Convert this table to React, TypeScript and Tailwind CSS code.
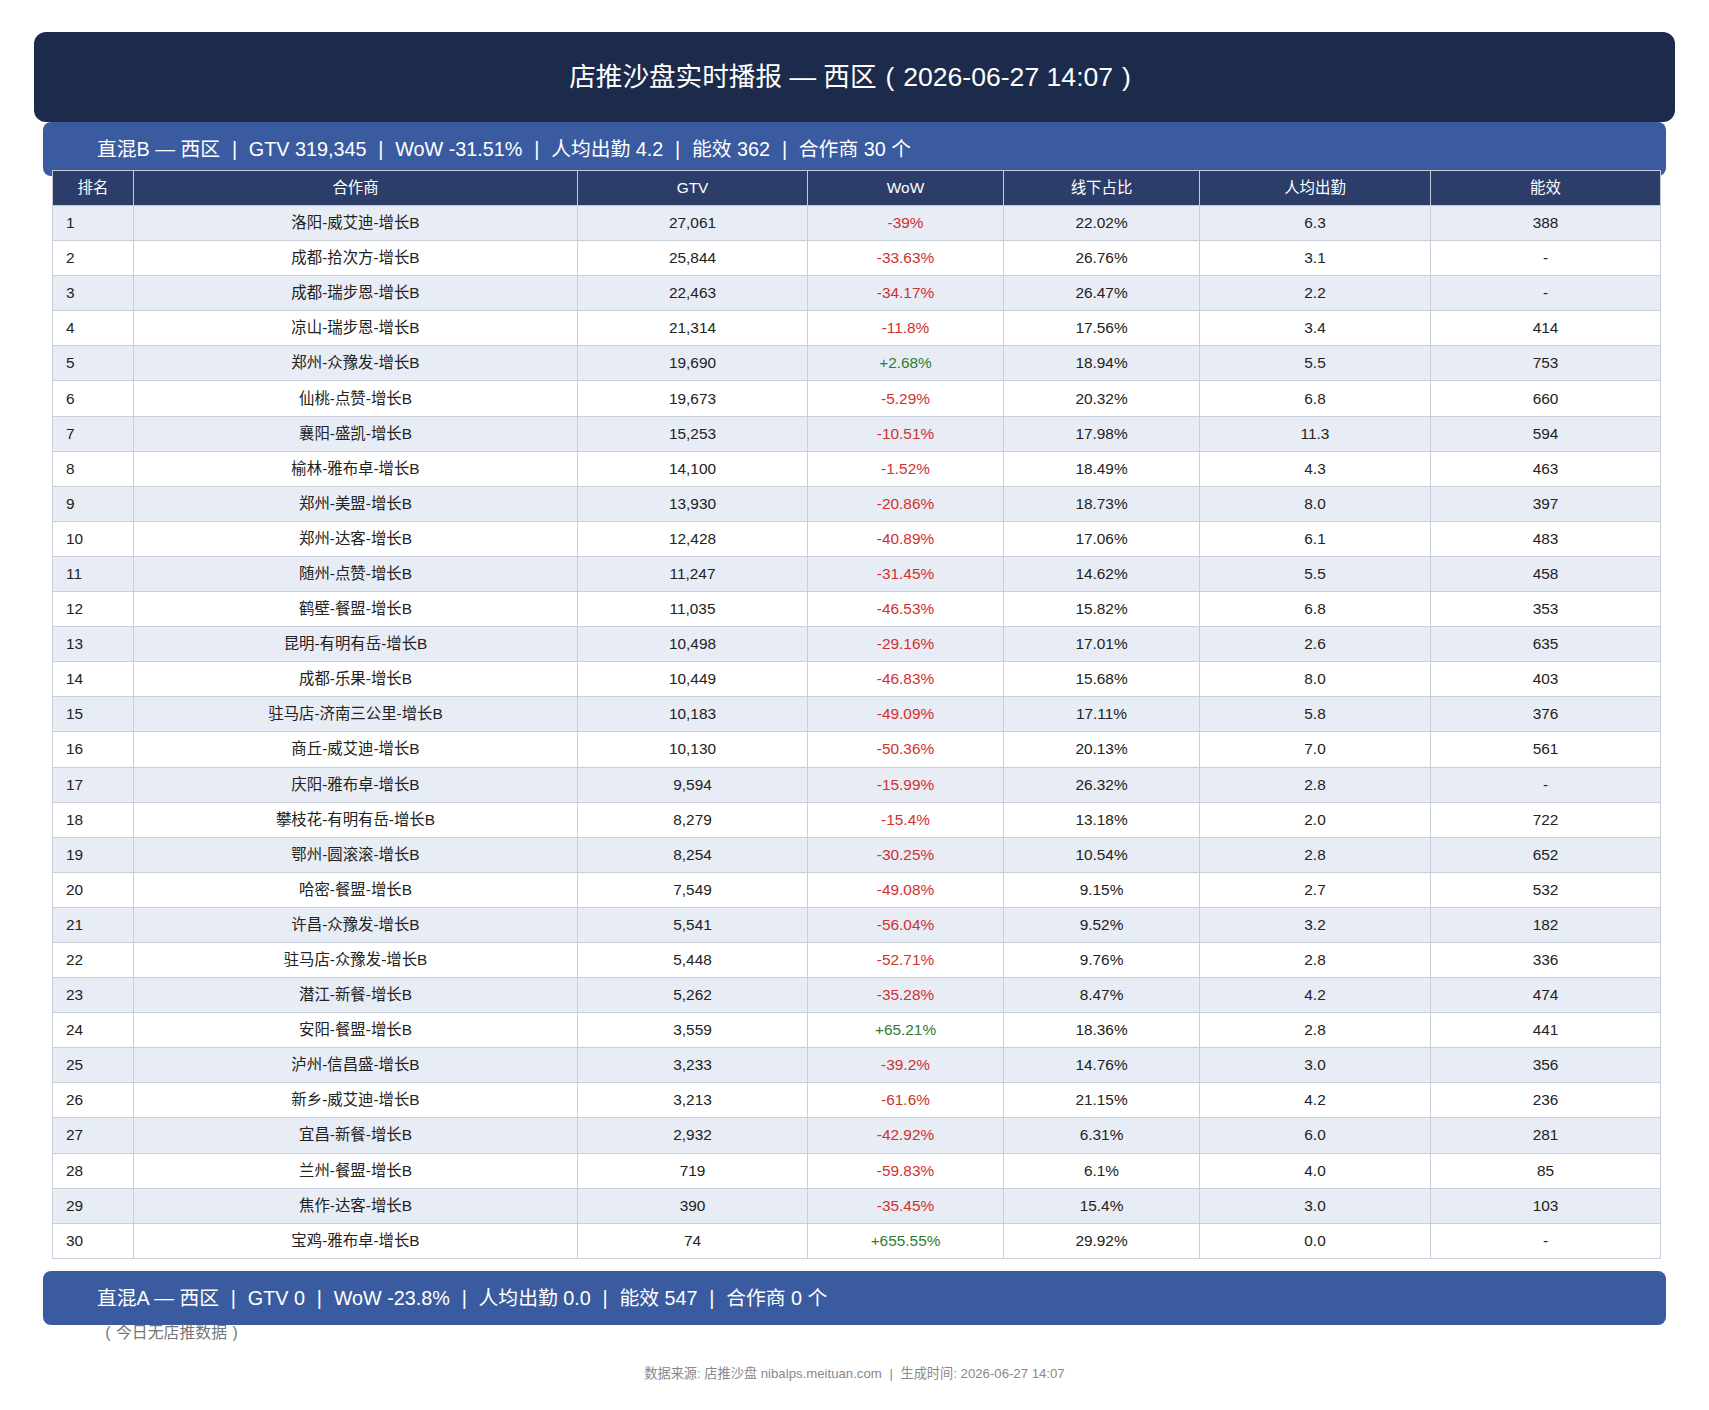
import React from "react"

type Row = [string, string, string, string, string, string]

const rows: Row[] = [
  ["洛阳-威艾迪-增长B", "27,061", "-39%", "22.02%", "6.3", "388"],
  ["成都-拾次方-增长B", "25,844", "-33.63%", "26.76%", "3.1", "-"],
  ["成都-瑞步恩-增长B", "22,463", "-34.17%", "26.47%", "2.2", "-"],
  ["凉山-瑞步恩-增长B", "21,314", "-11.8%", "17.56%", "3.4", "414"],
  ["郑州-众豫发-增长B", "19,690", "+2.68%", "18.94%", "5.5", "753"],
  ["仙桃-点赞-增长B", "19,673", "-5.29%", "20.32%", "6.8", "660"],
  ["襄阳-盛凯-增长B", "15,253", "-10.51%", "17.98%", "11.3", "594"],
  ["榆林-雅布卓-增长B", "14,100", "-1.52%", "18.49%", "4.3", "463"],
  ["郑州-美盟-增长B", "13,930", "-20.86%", "18.73%", "8.0", "397"],
  ["郑州-达客-增长B", "12,428", "-40.89%", "17.06%", "6.1", "483"],
  ["随州-点赞-增长B", "11,247", "-31.45%", "14.62%", "5.5", "458"],
  ["鹤壁-餐盟-增长B", "11,035", "-46.53%", "15.82%", "6.8", "353"],
  ["昆明-有明有岳-增长B", "10,498", "-29.16%", "17.01%", "2.6", "635"],
  ["成都-乐果-增长B", "10,449", "-46.83%", "15.68%", "8.0", "403"],
  ["驻马店-济南三公里-增长B", "10,183", "-49.09%", "17.11%", "5.8", "376"],
  ["商丘-威艾迪-增长B", "10,130", "-50.36%", "20.13%", "7.0", "561"],
  ["庆阳-雅布卓-增长B", "9,594", "-15.99%", "26.32%", "2.8", "-"],
  ["攀枝花-有明有岳-增长B", "8,279", "-15.4%", "13.18%", "2.0", "722"],
  ["鄂州-圆滚滚-增长B", "8,254", "-30.25%", "10.54%", "2.8", "652"],
  ["哈密-餐盟-增长B", "7,549", "-49.08%", "9.15%", "2.7", "532"],
  ["许昌-众豫发-增长B", "5,541", "-56.04%", "9.52%", "3.2", "182"],
  ["驻马店-众豫发-增长B", "5,448", "-52.71%", "9.76%", "2.8", "336"],
  ["潜江-新餐-增长B", "5,262", "-35.28%", "8.47%", "4.2", "474"],
  ["安阳-餐盟-增长B", "3,559", "+65.21%", "18.36%", "2.8", "441"],
  ["泸州-信昌盛-增长B", "3,233", "-39.2%", "14.76%", "3.0", "356"],
  ["新乡-威艾迪-增长B", "3,213", "-61.6%", "21.15%", "4.2", "236"],
  ["宜昌-新餐-增长B", "2,932", "-42.92%", "6.31%", "6.0", "281"],
  ["兰州-餐盟-增长B", "719", "-59.83%", "6.1%", "4.0", "85"],
  ["焦作-达客-增长B", "390", "-35.45%", "15.4%", "3.0", "103"],
  ["宝鸡-雅布卓-增长B", "74", "+655.55%", "29.92%", "0.0", "-"],
]

const headers = ["排名", "合作商", "GTV", "WoW", "线下占比", "人均出勤", "能效"]
const widths = ["w-[81px]", "w-[444px]", "w-[230px]", "w-[196px]", "w-[196px]", "w-[231px]", "w-[230px]"]

const font = "font-['Liberation_Sans','Noto_Sans_CJK_SC',sans-serif]"

// full-width style bracket, glyph centred in a 1em cell
const Paren = ({ c }: { c: string }) => <span className="inline-block w-[1em] text-center">{c}</span>

function SectionBar({ parts }: { parts: string[] }) {
  return (
    <div className="flex h-[54px] items-center rounded-lg bg-[#3a5ba0] pl-[54px] text-[19.8px] leading-[24px] text-white">
      {parts.map((p, i) => (
        <React.Fragment key={i}>
          {i > 0 && <span className="mx-[11.8px]">|</span>}
          <span>{p}</span>
        </React.Fragment>
      ))}
    </div>
  )
}

export default function App() {
  return (
    <div className={`min-h-[1410px] bg-white px-[34px] pt-[32px] pb-6 ${font}`}>
      {/* title */}
      <div className="flex h-[90px] items-center justify-center rounded-xl bg-[#1c2a4b] text-[26.6px] leading-[30px] text-white">
        <span>
          店推沙盘实时播报 — 西区<Paren c="(" />2026-06-27 14:07<Paren c=")" />
        </span>
      </div>

      <div className="mx-[9px]">
        <SectionBar parts={["直混B — 西区", "GTV 319,345", "WoW -31.51%", "人均出勤 4.2", "能效 362", "合作商 30 个"]} />

        <div className="mx-[9px] -mt-[6px]">
          <table className="w-full table-fixed border-collapse text-[15.4px] leading-[18px]">
            <colgroup>
              {widths.map((w, i) => (
                <col key={i} className={w} />
              ))}
            </colgroup>
            <thead>
              <tr className="bg-[#2c3d6a] text-white">
                {headers.map((h) => (
                  <th key={h} className="border border-[#c3cad6] py-2 text-center font-normal">
                    {h}
                  </th>
                ))}
              </tr>
            </thead>
            <tbody className="text-[#222]">
              {rows.map((r, i) => {
                const wowColor = r[2].startsWith("+") ? "text-[#2e7d32]" : "text-[#d32f2f]"
                return (
                  <tr key={i} className={i % 2 === 0 ? "bg-[#e8ecf5]" : "bg-white"}>
                    <td className="border border-[#c8cfda] py-[8.05px] pl-[13px] text-left">{i + 1}</td>
                    <td className="border border-[#c8cfda] py-[8.05px] text-center">{r[0]}</td>
                    <td className="border border-[#c8cfda] py-[8.05px] text-center">{r[1]}</td>
                    <td className={`border border-[#c8cfda] py-[8.05px] text-center ${wowColor}`}>{r[2]}</td>
                    <td className="border border-[#c8cfda] py-[8.05px] text-center">{r[3]}</td>
                    <td className="border border-[#c8cfda] py-[8.05px] text-center">{r[4]}</td>
                    <td className="border border-[#c8cfda] py-[8.05px] text-center">{r[5]}</td>
                  </tr>
                )
              })}
            </tbody>
          </table>
        </div>

        <div className="mt-[12px]">
          <SectionBar parts={["直混A — 西区", "GTV 0", "WoW -23.8%", "人均出勤 0.0", "能效 547", "合作商 0 个"]} />
        </div>
        <div className="pl-[57px] text-[15.9px] leading-[16px] text-[#777]">
          <Paren c="(" />今日无店推数据<Paren c=")" />
        </div>
      </div>

      <div className="mt-[24px] text-center text-[13.2px] leading-[18px] text-[#888]">
        数据来源: 店推沙盘 nibalps.meituan.com <span className="mx-1">|</span> 生成时间: 2026-06-27 14:07
      </div>
    </div>
  )
}
